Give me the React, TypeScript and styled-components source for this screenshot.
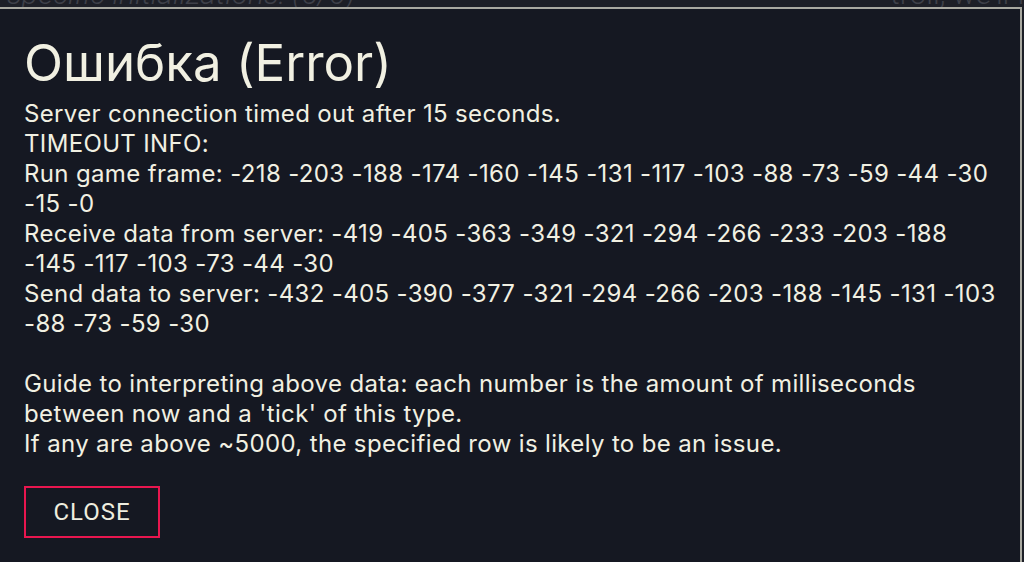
import styled, { createGlobalStyle } from 'styled-components'

const GlobalStyle = createGlobalStyle`
  html, body {
    margin: 0;
    padding: 0;
    background: #1d1f27;
    overflow: hidden;
  }
  #root {
    height: 562px;
  }
`

const Page = styled.div`
  width: 1024px;
  height: 562px;
  display: flex;
  flex-direction: column;
  overflow: hidden;
`

const BackStrip = styled.div`
  height: 7px;
  flex-shrink: 0;
  overflow: hidden;
  display: grid;
  grid-template-columns: 890px 1fr;
  font-family: Roboto, 'Liberation Sans', sans-serif;
  font-weight: 300;
  font-size: 30px;
  line-height: 30px;
  color: #3e4049;
`

const BackText = styled.span<{ $italic?: boolean; $indent: number }>`
  display: block;
  margin-top: -21px;
  white-space: nowrap;
  overflow: hidden;
  font-style: ${(p) => (p.$italic ? 'italic' : 'normal')};
  margin-left: ${(p) => p.$indent}px;
`

const Modal = styled.div`
  flex: 1;
  margin-right: 2px;
  background: #151822;
  border-top: 2px solid #a9a9a1;
  border-right: 2px solid #a9a9a1;
  padding: 24px 24px 0 24px;
  color: #f1f0e2;
  font-family: Inter, 'Open Sans', sans-serif;
`

const Title = styled.h1`
  margin: 0 0 6px;
  font-size: 51px;
  font-weight: 400;
  line-height: 60px;
`

const Body = styled.div`
  font-size: 24px;
  letter-spacing: 0.35px;
  line-height: 30px;
`

const Line = styled.div``

const Spacer = styled.div`
  height: 30px;
`

const CloseButton = styled.button`
  margin-top: 27px;
  width: 136px;
  height: 52px;
  background: transparent;
  border: 2px solid #e8164f;
  color: #eeeddf;
  font-family: Roboto, 'Liberation Sans', sans-serif;
  font-size: 24px;
  letter-spacing: 1px;
  cursor: pointer;
`

const runFrame = [-218, -203, -188, -174, -160, -145, -131, -117, -103, -88, -73, -59, -44, -30, -15, -0]
const receive = [-419, -405, -363, -349, -321, -294, -266, -233, -203, -188, -145, -117, -103, -73, -44, -30]
const send = [-432, -405, -390, -377, -321, -294, -266, -203, -188, -145, -131, -103, -88, -73, -59, -30]

const fmt = (list: number[]) => list.map((n) => (Object.is(n, -0) || n === 0 ? '-0' : String(n))).join(' ')

export default function App() {
  return (
    <>
      <GlobalStyle />
      <Page>
        <BackStrip>
          <BackText $italic $indent={-10}>r specific initializations: (5/6)</BackText>
          <BackText $indent={0}>troll, we'll find out</BackText>
        </BackStrip>
        <Modal>
          <Title>Ошибка (Error)</Title>
          <Body>
            <Line>Server connection timed out after 15 seconds.</Line>
            <Line>TIMEOUT INFO:</Line>
            <Line>Run game frame: {fmt(runFrame)}</Line>
            <Line>Receive data from server: {fmt(receive)}</Line>
            <Line>Send data to server: {fmt(send)}</Line>
            <Spacer />
            <Line>
              Guide to interpreting above data: each number is the amount of milliseconds between now and a
              'tick' of this type.
            </Line>
            <Line>If any are above ~5000, the specified row is likely to be an issue.</Line>
          </Body>
          <CloseButton>CLOSE</CloseButton>
        </Modal>
      </Page>
    </>
  )
}
